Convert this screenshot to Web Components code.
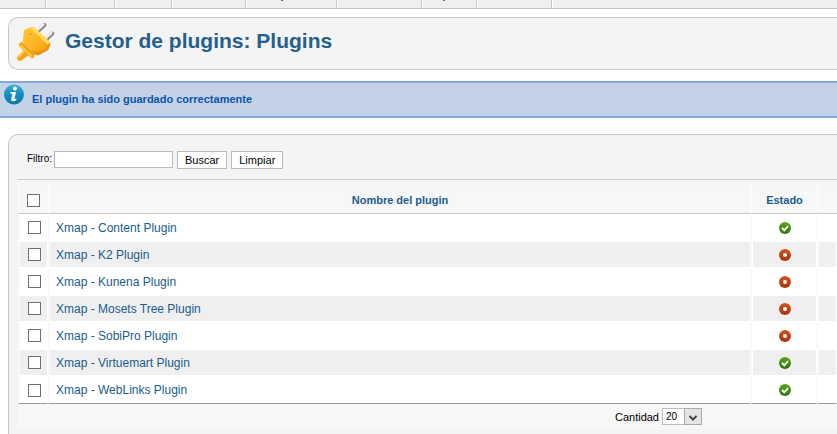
<!DOCTYPE html>
<html lang="es">
<head>
<meta charset="utf-8">
<title>Gestor de plugins</title>
<style>
    body {
        margin: 0;
        background: #fff;
        color: #000;
        font: 11px/16px "Liberation Sans", Arial, sans-serif;
        overflow: hidden;
    }
</style>
</head>
<body>
<pm-menu></pm-menu>
<pm-title>Gestor de plugins: Plugins</pm-title>
<pm-message>El plugin ha sido guardado correctamente</pm-message>
<pm-panel>
    <pm-filter></pm-filter>
    <pm-list></pm-list>
</pm-panel>

<script>
class Base extends HTMLElement {
    constructor () {
        super()
        this.attachShadow({mode: 'open'})
    }
    render (css, html) {
        const template = document.createElement('template')
        template.innerHTML = `<style>${css}</style>${html}`
        this.shadowRoot.replaceChildren(template.content)
    }
}

// lower edge of the menu bar, with one cell per menu
customElements.define('pm-menu', class extends Base {
    connectedCallback () {
        const cells = [46, 69, 57, 74, 91, 85, 55, 75]
        const marked = [4, 6]
        this.render(`
            :host {
                display: flex;
                height: 8px;
                background: #efefef;
                border-bottom: 1px solid #c6c6c6;
            }
            span {
                box-sizing: border-box;
                border-right: 1px solid #c8c8c8;
                box-shadow: 1px 0 #fff;
            }
            .mark::before {
                content: "";
                display: block;
                width: 2px;
                height: 1px;
                margin-left: 35px;
                background: #666;
            }
            .mark ~ .mark::before { margin-left: 21px; }
        `, cells.map((w, i) => `<span class="${marked.includes(i) ? 'mark' : ''}" style="width:${w}px"></span>`).join(''))
    }
})

customElements.define('pm-title', class extends Base {
    connectedCallback () {
        this.render(`
            :host {
                display: flex;
                align-items: center;
                gap: 8px;
                height: 51px;
                margin: 8px 0 11px 8px;
                padding-left: 5px;
                background: #f4f4f4;
                border: 1px solid #c8c8c8;
                border-right: 0;
                border-radius: 10px 0 0 10px;
            }
            h1 {
                margin: 0 0 5px;
                color: #24608c;
                font-size: 21px;
                line-height: 24px;
            }
        `, `
            <svg width="43" height="44" viewBox="0 0 43 44" fill="none" aria-hidden="true">
                <defs>
                    <linearGradient id="g" x1="0" y1="0" x2="1" y2="1">
                        <stop offset="0" stop-color="#ffc93c"/>
                        <stop offset=".55" stop-color="#fcb321"/>
                        <stop offset="1" stop-color="#f09a0c"/>
                    </linearGradient>
                </defs>
                <g stroke-linecap="round">
                    <path d="M23 10 30.500 3M31 18.500 38.500 11.500" stroke="#8b8b8b" stroke-width="4"/>
                    <path d="M22 9.500 29.500 2.500M30 18 37.500 11" stroke="#f2f2f2" stroke-width="2"/>
                </g>
                <path d="M10 28 15 33 8 38Q6 40 4 38L3 36Q3 35 4 34Z" fill="#f4a414"/>
                <path d="M10 29 4 35" stroke="#ffce52" stroke-width="2"/>
                <path d="M8 20Q4 21 5 24L17 36Q19 37 20 35L21 32Z" fill="#f2a313"/>
                <path d="M6 23 18 35" stroke="#ffc640" stroke-width="2"/>
                <path d="M10 8 17 5Q19 4 21 6L36 20Q37 22 36 24L34 28 25 33Q23 34 21 32L10 22Q8 20 9 17Z" fill="url(#g)"/>
                <path d="M18 5Q20 5 21 6L36 20 34 23 16 6Z" fill="#ffd860"/>
                <path d="M36 22 34 28 25 33Q23 34 21 32L17 28 24 30 32 26 34 22Z" fill="#e99410"/>
                <path d="M13 27 17 31M15 13 18 11" stroke="#e39b10"/>
            </svg>
            <h1><slot></slot></h1>
        `)
    }
})

customElements.define('pm-message', class extends Base {
    connectedCallback () {
        this.render(`
            :host {
                display: flex;
                align-items: flex-start;
                gap: 8px;
                height: 33px;
                padding-left: 4px;
                background: #c3d2e5;
                border-top: 2px solid #84a7db;
                border-bottom: 2px solid #84a7db;
                color: #0b55ac;
                font-weight: bold;
            }
            svg { margin-top: 1px; }
            p { margin: 8px 0 0; }
        `, `
            <svg width="20" height="21" viewBox="0 0 20 21" aria-hidden="true">
                <defs>
                    <linearGradient id="i" x1="0" y1="0" x2="0" y2="1">
                        <stop offset="0" stop-color="#38b0d8"/>
                        <stop offset=".5" stop-color="#148dbf"/>
                        <stop offset="1" stop-color="#0878b0"/>
                    </linearGradient>
                </defs>
                <circle cx="10" cy="10.500" r="10" fill="url(#i)"/>
                <circle cx="11" cy="4.500" r="2" fill="#fff"/>
                <path d="M6.500 8H12L10.500 14.500Q10.700 15.300 12.500 14.500L12 16.500Q6.500 18.500 7.200 15L8.500 9.700H6.500Z" fill="#fff"/>
            </svg>
            <p role="status"><slot></slot></p>
        `)
    }
})

customElements.define('pm-panel', class extends Base {
    connectedCallback () {
        this.render(`
            :host {
                display: block;
                margin: 16px 0 0 8px;
                padding: 16px 0 16px 9px;
                background: #f4f4f4;
                border: 1px solid #c8c8c8;
                border-right: 0;
                border-radius: 10px 0 0 10px;
            }
        `, '<slot></slot>')
    }
})

customElements.define('pm-filter', class extends Base {
    connectedCallback () {
        this.render(`
            :host {
                display: flex;
                align-items: flex-start;
                gap: 4px;
                height: 28px;
                padding-left: 9px;
                border-bottom: 1px solid #ccc;
            }
            label { display: flex; font-size: 10px; }
            span { width: 27px; white-space: nowrap; }
            input, button {
                box-sizing: border-box;
                height: 18px;
                margin: 0;
                padding: 0;
                background: #fff;
                border: 1px solid #bbb;
                border-radius: 0;
            }
            input { width: 119px; height: 17px; }
            button {
                padding: 0 7px;
                color: #000;
                font: inherit;
            }
        `, `
            <label><span>Filtro:</span><input type="text"></label>
            <button type="button">Buscar</button>
            <button type="button">Limpiar</button>
        `)
    }
})

customElements.define('pm-state', class extends Base {
    connectedCallback () {
        const on = this.hasAttribute('on')
        this.render(`
            :host { display: block; height: 12px; }
            svg { display: block; margin: 0 auto; }
        `, `
            <svg width="12" height="12" viewBox="0 0 12 12" role="img" aria-label="${on ? 'on' : 'off'}">
                <defs>
                    <linearGradient id="s" x1="0" y1="0" x2="0" y2="1">
                        <stop offset="0" stop-color="${on ? '#5aa51c' : '#cf5524'}"/>
                        <stop offset="1" stop-color="${on ? '#2f700c' : '#a93208'}"/>
                    </linearGradient>
                </defs>
                <circle cx="6" cy="6" r="6" fill="url(#s)"/>
                ${on
                    ? '<path d="M3 6 5.300 8.300 9 4.200" fill="none" stroke="#fff" stroke-width="2"/>'
                    : '<circle cx="6" cy="6" r="2" fill="#fff"/>'}
            </svg>
        `)
    }
})

customElements.define('pm-list', class extends Base {
    #plugins = [
        ['Content', true],
        ['K2', false],
        ['Kunena', false],
        ['Mosets Tree', false],
        ['SobiPro', false],
        ['Virtuemart', true],
        ['WebLinks', true],
    ]

    connectedCallback () {
        const rows = this.#plugins.map(([name, on]) => `
            <tr>
                <td><input type="checkbox" aria-label="Xmap - ${name} Plugin"></td>
                <td><a href="#">Xmap - ${name} Plugin</a></td>
                <td><pm-state ${on ? 'on' : ''}></pm-state></td>
                <td></td>
            </tr>`).join('')
        this.render(`
            :host { display: block; }
            table {
                width: 100%;
                table-layout: fixed;
                border-collapse: separate;
                border-spacing: 0;
            }
            col.check { width: 30px; }
            col.state { width: 66px; }
            col.rest { width: 20px; }
            th, td {
                box-sizing: border-box;
                padding: 0;
                vertical-align: middle;
            }
            th {
                height: 34px;
                padding-top: 7px;
                background: linear-gradient(#f4f4f4, #f7f7f7 8px);
                border-bottom: 1px solid #c8c8c8;
                border-left: 1px solid #fcfcfc;
                color: #1a5c8e;
                font-weight: bold;
                text-align: center;
            }
            tbody td {
                height: 27px;
                background: #efefef padding-box;
                border: 1px solid #fff;
                border-left-color: #f4f4f4;
                box-shadow: inset 1px 0 #fff;
            }
            tbody tr:nth-child(odd) td { background: #fff; }
            tbody td:nth-child(2) { padding-left: 7px; }
            tbody td:nth-child(3) { padding-left: 1px; }
            tbody tr:last-child td {
                height: 28px;
                border-bottom-color: #999;
            }
            a {
                color: #1a5c8e;
                font-size: 12px;
                text-decoration: none;
            }
            input {
                appearance: none;
                display: block;
                box-sizing: border-box;
                width: 13px;
                height: 13px;
                margin: 0 0 0 9px;
                background: #fff;
                border: 1px solid #707070;
            }
            th input { margin-left: 8px; }
            tfoot td {
                height: 25px;
                background: #f7f7f7;
            }
            tfoot label {
                display: flex;
                align-items: center;
                justify-content: flex-end;
                gap: 3px;
                padding-right: 135px;
            }
            .select {
                display: grid;
                width: 40px;
                height: 17px;
            }
            .select > * { grid-area: 1 / 1; }
            select {
                appearance: none;
                box-sizing: border-box;
                width: 40px;
                height: 17px;
                padding: 0 0 0 3px;
                background: #fff;
                border: 1px solid #bbb;
                border-radius: 0;
                color: #000;
                font: 10px/15px "Liberation Sans", Arial, sans-serif;
            }
            svg { justify-self: end; pointer-events: none; }
        `, `
            <table>
                <colgroup><col class="check"><col><col class="state"><col class="rest"></colgroup>
                <thead>
                    <tr>
                        <th><input type="checkbox" aria-label="Nombre del plugin"></th>
                        <th>Nombre del plugin</th>
                        <th>Estado</th>
                        <th></th>
                    </tr>
                </thead>
                <tbody>${rows}</tbody>
                <tfoot>
                    <tr>
                        <td colspan="4">
                            <label>Cantidad
                                <span class="select">
                                    <select><option>20</option></select>
                                    <svg width="18" height="17" viewBox="0 0 18 17">
                                        <path d="M.500.500H17.500V16.500H.500Z" fill="#e4e4e4" stroke="#aaa"/>
                                        <path d="M5.500 8 9 11.500 12.500 8" fill="none" stroke="#444" stroke-width="2"/>
                                    </svg>
                                </span>
                            </label>
                        </td>
                    </tr>
                </tfoot>
            </table>
        `)
    }
})
</script>
</body>
</html>
